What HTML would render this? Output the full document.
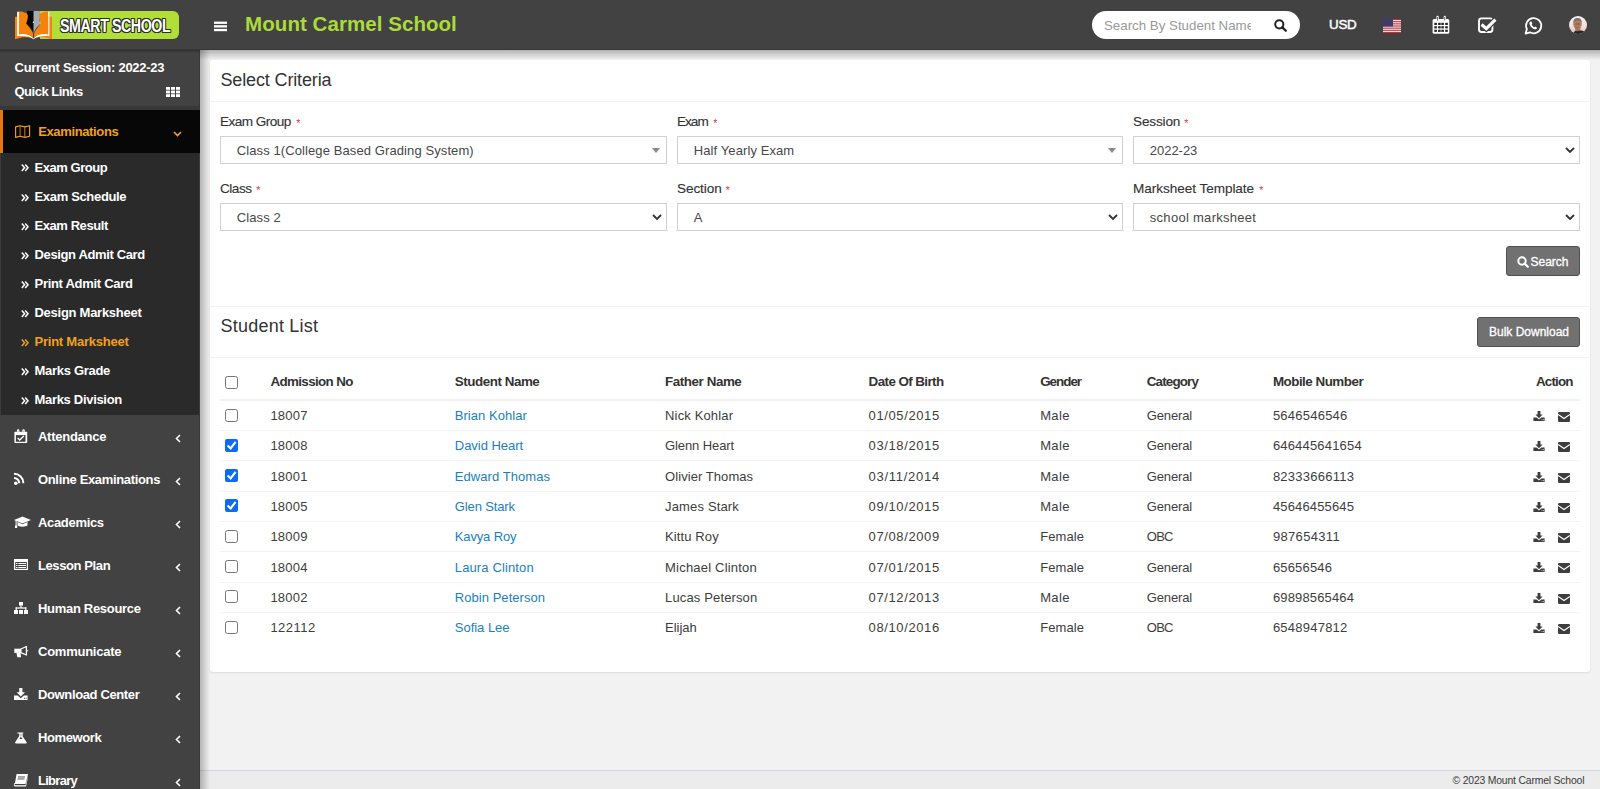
<!DOCTYPE html>
<html><head><meta charset="utf-8">
<style>
*{box-sizing:border-box;margin:0;padding:0}
html,body{width:1600px;height:789px;overflow:hidden;background:#f2f2f2;font-family:"Liberation Sans",sans-serif;color:#333;position:relative}
.a{position:absolute}
.t{position:absolute;line-height:1;white-space:nowrap}
svg{position:absolute;overflow:visible}
</style></head><body>
<div class="a" style="left:200px;top:50px;width:1400px;height:739px;background:#f2f2f2"></div>
<div class="a" style="left:200px;top:770px;width:1400px;height:19px;background:#ececec;border-top:1px solid #d2d6de"></div>
<div class="a" style="left:200px;top:50px;width:10px;height:739px;background:linear-gradient(to right,rgba(0,0,0,.25),rgba(0,0,0,0))"></div>
<div class="a" style="left:200px;top:50px;width:1400px;height:10px;background:linear-gradient(to bottom,rgba(0,0,0,.26),rgba(0,0,0,.0))"></div>
<div class="t" style="left:1452.50px;top:775.56px;font-size:10.4px;color:#3a3a3a;letter-spacing:-0.180px;">© 2023 Mount Carmel School</div>
<div class="a" style="left:210px;top:60px;width:1380px;height:612px;background:#fff;border-radius:3px;box-shadow:0 1px 2px rgba(0,0,0,.09)"></div>
<div class="a" style="left:210px;top:101px;width:1380px;height:1px;background:#f4f4f4"></div>
<div class="t" style="left:220.50px;top:70.90px;font-size:18px;color:#333;letter-spacing:-0.143px;">Select Criteria</div>
<div class="t" style="left:220.00px;top:115.04px;font-size:13.6px;color:#333;letter-spacing:-0.556px;-webkit-text-stroke:0.12px #333;">Exam Group</div>
<div class="t" style="left:296.3px;top:118.0px;font-size:10.5px;color:#e0304a">*</div>
<div class="a" style="left:220px;top:136px;width:447px;height:28px;background:#fff;border:1px solid #d2d2d2"></div>
<div class="t" style="left:236.80px;top:143.95px;font-size:13px;color:#474747;letter-spacing:0.097px;">Class 1(College Based Grading System)</div>
<svg style="left:652px;top:148px" width="8" height="5" viewBox="0 0 8 5"><path d="M0 0 L8 0 L4 5 Z" fill="#888"/></svg>
<div class="t" style="left:677.00px;top:115.04px;font-size:13.6px;color:#333;letter-spacing:-1.000px;-webkit-text-stroke:0.12px #333;">Exam</div>
<div class="t" style="left:713.3px;top:118.0px;font-size:10.5px;color:#e0304a">*</div>
<div class="a" style="left:677px;top:136px;width:446px;height:28px;background:#fff;border:1px solid #d2d2d2"></div>
<div class="t" style="left:693.80px;top:143.95px;font-size:13px;color:#474747;letter-spacing:0.093px;">Half Yearly Exam</div>
<svg style="left:1108px;top:148px" width="8" height="5" viewBox="0 0 8 5"><path d="M0 0 L8 0 L4 5 Z" fill="#888"/></svg>
<div class="t" style="left:1133.00px;top:115.04px;font-size:13.6px;color:#333;letter-spacing:-0.167px;-webkit-text-stroke:0.12px #333;">Session</div>
<div class="t" style="left:1184.3px;top:118.0px;font-size:10.5px;color:#e0304a">*</div>
<div class="a" style="left:1133px;top:136px;width:447px;height:28px;background:#fff;border:1px solid #d2d2d2"></div>
<div class="t" style="left:1149.80px;top:143.95px;font-size:13px;color:#474747;letter-spacing:-0.033px;">2022-23</div>
<svg style="left:1565px;top:147px" width="10" height="6" viewBox="0 0 10 6"><path d="M1 1 L5 5 L9 1" fill="none" stroke="#333" stroke-width="1.8"/></svg>
<div class="t" style="left:220.00px;top:181.84px;font-size:13.6px;color:#333;letter-spacing:-0.500px;-webkit-text-stroke:0.12px #333;">Class</div>
<div class="t" style="left:256.3px;top:184.8px;font-size:10.5px;color:#e0304a">*</div>
<div class="a" style="left:220px;top:203px;width:447px;height:28px;background:#fff;border:1px solid #d2d2d2"></div>
<div class="t" style="left:236.80px;top:210.95px;font-size:13px;color:#474747;letter-spacing:0.100px;">Class 2</div>
<svg style="left:652px;top:214px" width="10" height="6" viewBox="0 0 10 6"><path d="M1 1 L5 5 L9 1" fill="none" stroke="#333" stroke-width="1.8"/></svg>
<div class="t" style="left:677.00px;top:181.84px;font-size:13.6px;color:#333;letter-spacing:-0.100px;-webkit-text-stroke:0.12px #333;">Section</div>
<div class="t" style="left:725.7px;top:184.8px;font-size:10.5px;color:#e0304a">*</div>
<div class="a" style="left:677px;top:203px;width:446px;height:28px;background:#fff;border:1px solid #d2d2d2"></div>
<div class="t" style="left:693.80px;top:210.95px;font-size:13px;color:#474747;">A</div>
<svg style="left:1108px;top:214px" width="10" height="6" viewBox="0 0 10 6"><path d="M1 1 L5 5 L9 1" fill="none" stroke="#333" stroke-width="1.8"/></svg>
<div class="t" style="left:1133.00px;top:181.84px;font-size:13.6px;color:#333;letter-spacing:-0.059px;-webkit-text-stroke:0.12px #333;">Marksheet Template</div>
<div class="t" style="left:1259.3px;top:184.8px;font-size:10.5px;color:#e0304a">*</div>
<div class="a" style="left:1133px;top:203px;width:447px;height:28px;background:#fff;border:1px solid #d2d2d2"></div>
<div class="t" style="left:1149.80px;top:210.95px;font-size:13px;color:#474747;letter-spacing:0.287px;">school marksheet</div>
<svg style="left:1565px;top:214px" width="10" height="6" viewBox="0 0 10 6"><path d="M1 1 L5 5 L9 1" fill="none" stroke="#333" stroke-width="1.8"/></svg>
<div class="a" style="left:1506px;top:246px;width:74px;height:30px;background:#717171;border:1px solid #505050;border-radius:3px"></div>
<svg style="left:1517px;top:255.7px" width="12" height="12" viewBox="0 0 12 12"><circle cx="5" cy="5" r="3.7" fill="none" stroke="#fff" stroke-width="2"/><path d="M7.6 7.6 L10.8 10.8" stroke="#fff" stroke-width="2.2" stroke-linecap="round"/></svg>
<div class="t" style="left:1530.50px;top:255.80px;font-size:12px;color:#fff;-webkit-text-stroke:0.3px #fff;">Search</div>
<div class="a" style="left:210px;top:306px;width:1380px;height:1px;background:#f4f4f4"></div>
<div class="a" style="left:210px;top:357px;width:1380px;height:1px;background:#f4f4f4"></div>
<div class="t" style="left:220.50px;top:317.30px;font-size:18px;color:#333;letter-spacing:0.227px;">Student List</div>
<div class="a" style="left:1477px;top:317px;width:103px;height:30px;background:#717171;border:1px solid #505050;border-radius:3px"></div>
<div class="t" style="left:1489.00px;top:326.30px;font-size:12px;color:#fff;-webkit-text-stroke:0.3px #fff;">Bulk Download</div>
<div class="t" style="left:270.40px;top:375.31px;font-size:13.4px;color:#333;font-weight:bold;letter-spacing:-0.636px;">Admission No</div>
<div class="t" style="left:454.80px;top:375.31px;font-size:13.4px;color:#333;font-weight:bold;letter-spacing:-0.455px;">Student Name</div>
<div class="t" style="left:665.10px;top:375.31px;font-size:13.4px;color:#333;font-weight:bold;letter-spacing:-0.440px;">Father Name</div>
<div class="t" style="left:868.60px;top:375.31px;font-size:13.4px;color:#333;font-weight:bold;letter-spacing:-0.583px;">Date Of Birth</div>
<div class="t" style="left:1040.20px;top:375.31px;font-size:13.4px;color:#333;font-weight:bold;letter-spacing:-1.000px;">Gender</div>
<div class="t" style="left:1146.80px;top:375.31px;font-size:13.4px;color:#333;font-weight:bold;letter-spacing:-0.857px;">Category</div>
<div class="t" style="left:1272.90px;top:375.31px;font-size:13.4px;color:#333;font-weight:bold;letter-spacing:-0.500px;">Mobile Number</div>
<div class="t" style="left:1535.90px;top:375.31px;font-size:13.4px;color:#333;font-weight:bold;letter-spacing:-0.800px;">Action</div>
<svg style="left:225px;top:376px" width="13" height="13" viewBox="0 0 13 13"><rect x="0.5" y="0.5" width="12" height="12" rx="2" fill="#fff" stroke="#767676" stroke-width="1"/></svg>
<div class="a" style="left:220px;top:399px;width:1360px;height:2px;background:#f1f1f1"></div>
<div class="a" style="left:220px;top:430px;width:1360px;height:1px;background:#f2f2f2"></div>
<svg style="left:225px;top:409px" width="13" height="13" viewBox="0 0 13 13"><rect x="0.5" y="0.5" width="12" height="12" rx="2" fill="#fff" stroke="#767676" stroke-width="1"/></svg>
<div class="t" style="left:270.40px;top:409.05px;font-size:13px;color:#3d3d3d;letter-spacing:0.237px;">18007</div>
<div class="t" style="left:454.80px;top:409.05px;font-size:13px;color:#1a80c0;letter-spacing:0.036px;">Brian Kohlar</div>
<div class="t" style="left:665.10px;top:409.05px;font-size:13px;color:#3d3d3d;letter-spacing:0.140px;">Nick Kohlar</div>
<div class="t" style="left:868.60px;top:409.05px;font-size:13px;color:#3d3d3d;letter-spacing:0.611px;">01/05/2015</div>
<div class="t" style="left:1040.20px;top:409.05px;font-size:13px;color:#3d3d3d;letter-spacing:0.333px;">Male</div>
<div class="t" style="left:1146.80px;top:409.05px;font-size:13px;color:#3d3d3d;letter-spacing:-0.133px;">General</div>
<div class="t" style="left:1272.90px;top:409.05px;font-size:13px;color:#3d3d3d;letter-spacing:0.233px;">5646546546</div>
<svg style="left:1533px;top:411px" width="12" height="10" viewBox="0 0 12 10"><path d="M4.6 0 H7.4 V3.6 H9.6 L6 7.2 L2.4 3.6 H4.6 Z" fill="#3d3d3d"/><path d="M0.4 6.4 H3.6 L6 8.6 L8.4 6.4 H11.6 V10 H0.4 Z" fill="#3d3d3d"/><rect x="8.6" y="8.2" width="0.9" height="0.9" fill="#ddd"/><rect x="10" y="8.2" width="0.9" height="0.9" fill="#ddd"/></svg>
<svg style="left:1558px;top:412px" width="12" height="10" viewBox="0 0 12 10"><rect x="0" y="0" width="12" height="10" rx="1.3" fill="#3d3d3d"/><path d="M0.2 2.5 L6 6.5 L11.8 2.5" fill="none" stroke="#fff" stroke-width="1.1"/></svg>
<div class="a" style="left:220px;top:460px;width:1360px;height:1px;background:#f2f2f2"></div>
<svg style="left:225px;top:439px" width="13" height="13" viewBox="0 0 13 13"><rect x="0" y="0" width="13" height="13" rx="2" fill="#0b6cf0"/><path d="M2.6 6.6 L5.6 9.5 L10.6 2.8" fill="none" stroke="#fff" stroke-width="2.1"/></svg>
<div class="t" style="left:270.40px;top:439.35px;font-size:13px;color:#3d3d3d;letter-spacing:0.237px;">18008</div>
<div class="t" style="left:454.80px;top:439.35px;font-size:13px;color:#1a80c0;letter-spacing:-0.030px;">David Heart</div>
<div class="t" style="left:665.10px;top:439.35px;font-size:13px;color:#3d3d3d;letter-spacing:-0.110px;">Glenn Heart</div>
<div class="t" style="left:868.60px;top:439.35px;font-size:13px;color:#3d3d3d;letter-spacing:0.611px;">03/18/2015</div>
<div class="t" style="left:1040.20px;top:439.35px;font-size:13px;color:#3d3d3d;letter-spacing:0.333px;">Male</div>
<div class="t" style="left:1146.80px;top:439.35px;font-size:13px;color:#3d3d3d;letter-spacing:-0.133px;">General</div>
<div class="t" style="left:1272.90px;top:439.35px;font-size:13px;color:#3d3d3d;letter-spacing:0.178px;">646445641654</div>
<svg style="left:1533px;top:441px" width="12" height="10" viewBox="0 0 12 10"><path d="M4.6 0 H7.4 V3.6 H9.6 L6 7.2 L2.4 3.6 H4.6 Z" fill="#3d3d3d"/><path d="M0.4 6.4 H3.6 L6 8.6 L8.4 6.4 H11.6 V10 H0.4 Z" fill="#3d3d3d"/><rect x="8.6" y="8.2" width="0.9" height="0.9" fill="#ddd"/><rect x="10" y="8.2" width="0.9" height="0.9" fill="#ddd"/></svg>
<svg style="left:1558px;top:442px" width="12" height="10" viewBox="0 0 12 10"><rect x="0" y="0" width="12" height="10" rx="1.3" fill="#3d3d3d"/><path d="M0.2 2.5 L6 6.5 L11.8 2.5" fill="none" stroke="#fff" stroke-width="1.1"/></svg>
<div class="a" style="left:220px;top:491px;width:1360px;height:1px;background:#f2f2f2"></div>
<svg style="left:225px;top:469px" width="13" height="13" viewBox="0 0 13 13"><rect x="0" y="0" width="13" height="13" rx="2" fill="#0b6cf0"/><path d="M2.6 6.6 L5.6 9.5 L10.6 2.8" fill="none" stroke="#fff" stroke-width="2.1"/></svg>
<div class="t" style="left:270.40px;top:469.65px;font-size:13px;color:#3d3d3d;letter-spacing:0.237px;">18001</div>
<div class="t" style="left:454.80px;top:469.65px;font-size:13px;color:#1a80c0;letter-spacing:0.067px;">Edward Thomas</div>
<div class="t" style="left:665.10px;top:469.65px;font-size:13px;color:#3d3d3d;letter-spacing:0.062px;">Olivier Thomas</div>
<div class="t" style="left:868.60px;top:469.65px;font-size:13px;color:#3d3d3d;letter-spacing:0.722px;">03/11/2014</div>
<div class="t" style="left:1040.20px;top:469.65px;font-size:13px;color:#3d3d3d;letter-spacing:0.333px;">Male</div>
<div class="t" style="left:1146.80px;top:469.65px;font-size:13px;color:#3d3d3d;letter-spacing:-0.133px;">General</div>
<div class="t" style="left:1272.90px;top:469.65px;font-size:13px;color:#3d3d3d;letter-spacing:0.253px;">82333666113</div>
<svg style="left:1533px;top:472px" width="12" height="10" viewBox="0 0 12 10"><path d="M4.6 0 H7.4 V3.6 H9.6 L6 7.2 L2.4 3.6 H4.6 Z" fill="#3d3d3d"/><path d="M0.4 6.4 H3.6 L6 8.6 L8.4 6.4 H11.6 V10 H0.4 Z" fill="#3d3d3d"/><rect x="8.6" y="8.2" width="0.9" height="0.9" fill="#ddd"/><rect x="10" y="8.2" width="0.9" height="0.9" fill="#ddd"/></svg>
<svg style="left:1558px;top:473px" width="12" height="10" viewBox="0 0 12 10"><rect x="0" y="0" width="12" height="10" rx="1.3" fill="#3d3d3d"/><path d="M0.2 2.5 L6 6.5 L11.8 2.5" fill="none" stroke="#fff" stroke-width="1.1"/></svg>
<div class="a" style="left:220px;top:521px;width:1360px;height:1px;background:#f2f2f2"></div>
<svg style="left:225px;top:499px" width="13" height="13" viewBox="0 0 13 13"><rect x="0" y="0" width="13" height="13" rx="2" fill="#0b6cf0"/><path d="M2.6 6.6 L5.6 9.5 L10.6 2.8" fill="none" stroke="#fff" stroke-width="2.1"/></svg>
<div class="t" style="left:270.40px;top:499.95px;font-size:13px;color:#3d3d3d;letter-spacing:0.237px;">18005</div>
<div class="t" style="left:454.80px;top:499.95px;font-size:13px;color:#1a80c0;letter-spacing:-0.133px;">Glen Stark</div>
<div class="t" style="left:665.10px;top:499.95px;font-size:13px;color:#3d3d3d;letter-spacing:0.150px;">James Stark</div>
<div class="t" style="left:868.60px;top:499.95px;font-size:13px;color:#3d3d3d;letter-spacing:0.611px;">09/10/2015</div>
<div class="t" style="left:1040.20px;top:499.95px;font-size:13px;color:#3d3d3d;letter-spacing:0.333px;">Male</div>
<div class="t" style="left:1146.80px;top:499.95px;font-size:13px;color:#3d3d3d;letter-spacing:-0.133px;">General</div>
<div class="t" style="left:1272.90px;top:499.95px;font-size:13px;color:#3d3d3d;letter-spacing:0.153px;">45646455645</div>
<svg style="left:1533px;top:502px" width="12" height="10" viewBox="0 0 12 10"><path d="M4.6 0 H7.4 V3.6 H9.6 L6 7.2 L2.4 3.6 H4.6 Z" fill="#3d3d3d"/><path d="M0.4 6.4 H3.6 L6 8.6 L8.4 6.4 H11.6 V10 H0.4 Z" fill="#3d3d3d"/><rect x="8.6" y="8.2" width="0.9" height="0.9" fill="#ddd"/><rect x="10" y="8.2" width="0.9" height="0.9" fill="#ddd"/></svg>
<svg style="left:1558px;top:503px" width="12" height="10" viewBox="0 0 12 10"><rect x="0" y="0" width="12" height="10" rx="1.3" fill="#3d3d3d"/><path d="M0.2 2.5 L6 6.5 L11.8 2.5" fill="none" stroke="#fff" stroke-width="1.1"/></svg>
<div class="a" style="left:220px;top:551px;width:1360px;height:1px;background:#f2f2f2"></div>
<svg style="left:225px;top:530px" width="13" height="13" viewBox="0 0 13 13"><rect x="0.5" y="0.5" width="12" height="12" rx="2" fill="#fff" stroke="#767676" stroke-width="1"/></svg>
<div class="t" style="left:270.40px;top:530.25px;font-size:13px;color:#3d3d3d;letter-spacing:0.237px;">18009</div>
<div class="t" style="left:454.80px;top:530.25px;font-size:13px;color:#1a80c0;letter-spacing:-0.150px;">Kavya Roy</div>
<div class="t" style="left:665.10px;top:530.25px;font-size:13px;color:#3d3d3d;letter-spacing:0.100px;">Kittu Roy</div>
<div class="t" style="left:868.60px;top:530.25px;font-size:13px;color:#3d3d3d;letter-spacing:0.611px;">07/08/2009</div>
<div class="t" style="left:1040.20px;top:530.25px;font-size:13px;color:#3d3d3d;letter-spacing:0.100px;">Female</div>
<div class="t" style="left:1146.80px;top:530.25px;font-size:13px;color:#3d3d3d;letter-spacing:-0.750px;">OBC</div>
<div class="t" style="left:1272.90px;top:530.25px;font-size:13px;color:#3d3d3d;letter-spacing:0.334px;">987654311</div>
<svg style="left:1533px;top:532px" width="12" height="10" viewBox="0 0 12 10"><path d="M4.6 0 H7.4 V3.6 H9.6 L6 7.2 L2.4 3.6 H4.6 Z" fill="#3d3d3d"/><path d="M0.4 6.4 H3.6 L6 8.6 L8.4 6.4 H11.6 V10 H0.4 Z" fill="#3d3d3d"/><rect x="8.6" y="8.2" width="0.9" height="0.9" fill="#ddd"/><rect x="10" y="8.2" width="0.9" height="0.9" fill="#ddd"/></svg>
<svg style="left:1558px;top:533px" width="12" height="10" viewBox="0 0 12 10"><rect x="0" y="0" width="12" height="10" rx="1.3" fill="#3d3d3d"/><path d="M0.2 2.5 L6 6.5 L11.8 2.5" fill="none" stroke="#fff" stroke-width="1.1"/></svg>
<div class="a" style="left:220px;top:582px;width:1360px;height:1px;background:#f2f2f2"></div>
<svg style="left:225px;top:560px" width="13" height="13" viewBox="0 0 13 13"><rect x="0.5" y="0.5" width="12" height="12" rx="2" fill="#fff" stroke="#767676" stroke-width="1"/></svg>
<div class="t" style="left:270.40px;top:560.55px;font-size:13px;color:#3d3d3d;letter-spacing:0.237px;">18004</div>
<div class="t" style="left:454.80px;top:560.55px;font-size:13px;color:#1a80c0;letter-spacing:0.125px;">Laura Clinton</div>
<div class="t" style="left:665.10px;top:560.55px;font-size:13px;color:#3d3d3d;letter-spacing:0.200px;">Michael Clinton</div>
<div class="t" style="left:868.60px;top:560.55px;font-size:13px;color:#3d3d3d;letter-spacing:0.611px;">07/01/2015</div>
<div class="t" style="left:1040.20px;top:560.55px;font-size:13px;color:#3d3d3d;letter-spacing:0.100px;">Female</div>
<div class="t" style="left:1146.80px;top:560.55px;font-size:13px;color:#3d3d3d;letter-spacing:-0.133px;">General</div>
<div class="t" style="left:1272.90px;top:560.55px;font-size:13px;color:#3d3d3d;letter-spacing:0.177px;">65656546</div>
<svg style="left:1533px;top:562px" width="12" height="10" viewBox="0 0 12 10"><path d="M4.6 0 H7.4 V3.6 H9.6 L6 7.2 L2.4 3.6 H4.6 Z" fill="#3d3d3d"/><path d="M0.4 6.4 H3.6 L6 8.6 L8.4 6.4 H11.6 V10 H0.4 Z" fill="#3d3d3d"/><rect x="8.6" y="8.2" width="0.9" height="0.9" fill="#ddd"/><rect x="10" y="8.2" width="0.9" height="0.9" fill="#ddd"/></svg>
<svg style="left:1558px;top:563px" width="12" height="10" viewBox="0 0 12 10"><rect x="0" y="0" width="12" height="10" rx="1.3" fill="#3d3d3d"/><path d="M0.2 2.5 L6 6.5 L11.8 2.5" fill="none" stroke="#fff" stroke-width="1.1"/></svg>
<div class="a" style="left:220px;top:612px;width:1360px;height:1px;background:#f2f2f2"></div>
<svg style="left:225px;top:590px" width="13" height="13" viewBox="0 0 13 13"><rect x="0.5" y="0.5" width="12" height="12" rx="2" fill="#fff" stroke="#767676" stroke-width="1"/></svg>
<div class="t" style="left:270.40px;top:590.85px;font-size:13px;color:#3d3d3d;letter-spacing:0.237px;">18002</div>
<div class="t" style="left:454.80px;top:590.85px;font-size:13px;color:#1a80c0;letter-spacing:0.046px;">Robin Peterson</div>
<div class="t" style="left:665.10px;top:590.85px;font-size:13px;color:#3d3d3d;letter-spacing:0.138px;">Lucas Peterson</div>
<div class="t" style="left:868.60px;top:590.85px;font-size:13px;color:#3d3d3d;letter-spacing:0.611px;">07/12/2013</div>
<div class="t" style="left:1040.20px;top:590.85px;font-size:13px;color:#3d3d3d;letter-spacing:0.333px;">Male</div>
<div class="t" style="left:1146.80px;top:590.85px;font-size:13px;color:#3d3d3d;letter-spacing:-0.133px;">General</div>
<div class="t" style="left:1272.90px;top:590.85px;font-size:13px;color:#3d3d3d;letter-spacing:0.153px;">69898565464</div>
<svg style="left:1533px;top:593px" width="12" height="10" viewBox="0 0 12 10"><path d="M4.6 0 H7.4 V3.6 H9.6 L6 7.2 L2.4 3.6 H4.6 Z" fill="#3d3d3d"/><path d="M0.4 6.4 H3.6 L6 8.6 L8.4 6.4 H11.6 V10 H0.4 Z" fill="#3d3d3d"/><rect x="8.6" y="8.2" width="0.9" height="0.9" fill="#ddd"/><rect x="10" y="8.2" width="0.9" height="0.9" fill="#ddd"/></svg>
<svg style="left:1558px;top:594px" width="12" height="10" viewBox="0 0 12 10"><rect x="0" y="0" width="12" height="10" rx="1.3" fill="#3d3d3d"/><path d="M0.2 2.5 L6 6.5 L11.8 2.5" fill="none" stroke="#fff" stroke-width="1.1"/></svg>
<svg style="left:225px;top:621px" width="13" height="13" viewBox="0 0 13 13"><rect x="0.5" y="0.5" width="12" height="12" rx="2" fill="#fff" stroke="#767676" stroke-width="1"/></svg>
<div class="t" style="left:270.40px;top:621.15px;font-size:13px;color:#3d3d3d;letter-spacing:0.476px;">122112</div>
<div class="t" style="left:454.80px;top:621.15px;font-size:13px;color:#1a80c0;letter-spacing:-0.025px;">Sofia Lee</div>
<div class="t" style="left:665.10px;top:621.15px;font-size:13px;color:#3d3d3d;letter-spacing:-0.020px;">Elijah</div>
<div class="t" style="left:868.60px;top:621.15px;font-size:13px;color:#3d3d3d;letter-spacing:0.611px;">08/10/2016</div>
<div class="t" style="left:1040.20px;top:621.15px;font-size:13px;color:#3d3d3d;letter-spacing:0.100px;">Female</div>
<div class="t" style="left:1146.80px;top:621.15px;font-size:13px;color:#3d3d3d;letter-spacing:-0.750px;">OBC</div>
<div class="t" style="left:1272.90px;top:621.15px;font-size:13px;color:#3d3d3d;letter-spacing:0.233px;">6548947812</div>
<svg style="left:1533px;top:623px" width="12" height="10" viewBox="0 0 12 10"><path d="M4.6 0 H7.4 V3.6 H9.6 L6 7.2 L2.4 3.6 H4.6 Z" fill="#3d3d3d"/><path d="M0.4 6.4 H3.6 L6 8.6 L8.4 6.4 H11.6 V10 H0.4 Z" fill="#3d3d3d"/><rect x="8.6" y="8.2" width="0.9" height="0.9" fill="#ddd"/><rect x="10" y="8.2" width="0.9" height="0.9" fill="#ddd"/></svg>
<svg style="left:1558px;top:624px" width="12" height="10" viewBox="0 0 12 10"><rect x="0" y="0" width="12" height="10" rx="1.3" fill="#3d3d3d"/><path d="M0.2 2.5 L6 6.5 L11.8 2.5" fill="none" stroke="#fff" stroke-width="1.1"/></svg>
<div class="a" style="left:0px;top:0px;width:1600px;height:50px;background:#424242"></div>
<div class="a" style="left:0px;top:49px;width:1600px;height:1px;background:#363636"></div>
<div class="a" style="left:40px;top:11px;width:139px;height:28px;background:#b2de38;border-radius:0 6px 6px 0"></div>
<svg style="left:14px;top:10px" width="40" height="30" viewBox="14 10 40 30">
<path d="M15 16.8 L18.2 16.8 L18.2 34.5 C24 33 30 34 33.6 38.6 C30 36.6 22 36.6 15 39.2 Z" fill="#f5820d"/>
<path d="M52 16.8 L48.8 16.8 L48.8 34.5 C43 33 37 34 33.6 38.6 C37 36.6 45 36.6 52 39.2 Z" fill="#f5820d"/>
<path d="M17.1 11.8 L19 11.8 L19 34.4 C24 33 30 34 33.6 38.4 L33.6 39.2 C30 36.3 23 35.6 17.1 36.3 Z" fill="#fff"/>
<path d="M49.4 11.8 L48.1 11.8 L48.1 34.4 C43 33 37 34 33.6 38.4 L33.6 39.2 C37 36.3 44 35.6 49.4 36.3 Z" fill="#fff"/>
<path d="M18.9 11.5 C24 11.6 27.5 13 28.7 16 C28 19 26 22 26.2 23.6 C28 26 31 29 33 33.3 L33 37.6 C30 34.5 24 33.6 18.9 34.3 Z" fill="#f5820d"/>
<path d="M48.2 11.5 C43 11.6 39.5 13 38.6 16 C39 19 41 22 40.8 23.6 C39 26 36 29 34.1 33.3 L34.1 37.6 C37 34.5 43 33.6 48.2 34.3 Z" fill="#f5820d"/>
<path d="M27.1 11 L33.6 11 L33.6 33 C32 29 29.5 26.5 26.4 23.6 C27.6 21 28 18 27.8 14.4 L27.1 14.4 Z" fill="#0a0a0a"/>
<path d="M33.6 11 L39.9 11 L39.9 14.4 L39.3 14.4 C39.1 18 39.6 21 40.6 23.6 C37.5 26.5 35 29 33.6 33 Z" fill="#a3acb0"/>
<circle cx="33.4" cy="22.3" r="0.7" fill="#fff"/>
</svg>
<div class="t" style="left:59.5px;top:17.4px;font-size:16.5px;font-weight:bold;color:#fff;letter-spacing:-0.5px;transform:scale(0.862,1.06);transform-origin:0 0;text-shadow:-1px 0 0 #2b2b2b,1px 0 0 #2b2b2b,0 -1px 0 #2b2b2b,0 1px 0 #2b2b2b,-1px -1px 0 #2b2b2b,1px 1px 0 #2b2b2b,-1px 1px 0 #2b2b2b,1px -1px 0 #2b2b2b">SMART SCHOOL</div>
<svg style="left:214px;top:21px" width="13" height="11" viewBox="0 0 13 11"><rect x="0" y="0.6" width="13" height="2.3" fill="#fff"/><rect x="0" y="4.2" width="13" height="2.3" fill="#fff"/><rect x="0" y="7.9" width="13" height="2.3" fill="#fff"/></svg>
<div class="t" style="left:245.10px;top:13.77px;font-size:20.5px;color:#abdb39;font-weight:bold;letter-spacing:0.056px;">Mount Carmel School</div>
<div class="a" style="left:1092px;top:11px;width:208px;height:28px;background:#fff;border-radius:14px"></div>
<div class="a" style="left:1104px;top:14px;width:147px;height:22px;overflow:hidden"><div class="t" style="left:0.00px;top:5.30px;font-size:13.3px;color:#999;">Search By Student Name</div>
</div>
<svg style="left:1274px;top:19px" width="13" height="13" viewBox="0 0 13 13"><circle cx="5.3" cy="5.3" r="4.1" fill="none" stroke="#222" stroke-width="2"/><path d="M8.4 8.4 L11.8 11.8" stroke="#222" stroke-width="2.3" stroke-linecap="round"/></svg>
<div class="t" style="left:1329.00px;top:18.31px;font-size:13.4px;color:#fff;letter-spacing:-0.250px;-webkit-text-stroke:0.45px #fff;">USD</div>
<svg style="left:1383px;top:19px" width="18" height="14" viewBox="0 0 18 14"><rect width="18" height="14" fill="#eee"/><rect y="0.00" width="18" height="1.08" fill="#c0303c"/><rect y="2.15" width="18" height="1.08" fill="#c0303c"/><rect y="4.31" width="18" height="1.08" fill="#c0303c"/><rect y="6.46" width="18" height="1.08" fill="#c0303c"/><rect y="8.62" width="18" height="1.08" fill="#c0303c"/><rect y="10.77" width="18" height="1.08" fill="#c0303c"/><rect y="12.92" width="18" height="1.08" fill="#c0303c"/><rect width="10" height="7.5" fill="#3c3b6e"/></svg>
<svg style="left:1432px;top:15px" width="18" height="19" viewBox="0 0 18 19"><rect x="0.6" y="3.9" width="16.7" height="14.9" rx="1.6" fill="#fff"/><rect x="4.4" y="0.8" width="2.3" height="5.3" rx="1.1" fill="#fff"/><rect x="11.6" y="0.8" width="2.3" height="5.3" rx="1.1" fill="#fff"/><rect x="5" y="2" width="1" height="3.5" fill="#6a6a6a"/><rect x="12.2" y="2" width="1" height="3.5" fill="#6a6a6a"/><rect x="2.3" y="7.8" width="2.6" height="2.2" fill="#262626"/><rect x="6.1" y="7.8" width="2.6" height="2.2" fill="#262626"/><rect x="9.3" y="7.8" width="2.6" height="2.2" fill="#262626"/><rect x="13.2" y="7.8" width="2.6" height="2.2" fill="#262626"/><rect x="2.3" y="11.2" width="2.6" height="2.2" fill="#262626"/><rect x="6.1" y="11.2" width="2.6" height="2.2" fill="#262626"/><rect x="9.3" y="11.2" width="2.6" height="2.2" fill="#262626"/><rect x="13.2" y="11.2" width="2.6" height="2.2" fill="#262626"/><rect x="2.3" y="14.7" width="2.6" height="2.2" fill="#262626"/><rect x="6.1" y="14.7" width="2.6" height="2.2" fill="#262626"/><rect x="9.3" y="14.7" width="2.6" height="2.2" fill="#262626"/><rect x="13.2" y="14.7" width="2.6" height="2.2" fill="#262626"/></svg>
<svg style="left:1477px;top:16px" width="20" height="18" viewBox="0 0 20 18"><rect x="2" y="2.4" width="13.4" height="13.6" rx="2.4" fill="none" stroke="#fff" stroke-width="1.9"/><path d="M4.6 8.5 L9.3 12.6 L18.4 3.6" fill="none" stroke="#424242" stroke-width="5.6"/><path d="M4.6 8.5 L9.3 12.6 L18.4 3.6" fill="none" stroke="#fff" stroke-width="3.1"/></svg>
<svg style="left:1524px;top:16px" width="19" height="19" viewBox="0 0 19 19"><path d="M1.6 17.6 L2.9 13.1 A7.6 7.6 0 1 1 6 16.3 Z" fill="none" stroke="#fff" stroke-width="1.8" stroke-linejoin="round"/><path d="M6.1 5.7 C5.4 6.3 5.2 7.6 6 9.2 C7.1 11.3 8.7 12.7 10.7 13.3 C11.9 13.6 12.8 12.9 13.1 12 L11.4 10.6 L10.5 11.3 C9.3 10.7 8.3 9.7 7.7 8.4 L8.4 7.5 L7.4 5.4 Z" fill="#fff"/></svg>
<svg style="left:1569px;top:15.6px" width="18" height="18" viewBox="0 0 18 18"><defs><clipPath id="av"><circle cx="9" cy="9" r="9"/></clipPath><linearGradient id="ag" x1="0" y1="0" x2="0" y2="1"><stop offset="0" stop-color="#f6f4f3"/><stop offset="0.6" stop-color="#f3dfd8"/><stop offset="0.8" stop-color="#e8cccc"/><stop offset="0.95" stop-color="#b8d0ea"/></linearGradient></defs>
<g clip-path="url(#av)"><rect width="18" height="18" fill="url(#ag)"/><rect x="6.3" y="11.5" width="5" height="5" fill="#a06e5a"/><path d="M4 18.5 L5.6 15.2 C7 14.6 8 15.2 9 15.3 L12 14.6 C14 14.5 15.6 15.5 16.8 18.5 Z" fill="#2a2220"/><ellipse cx="8.5" cy="8.3" rx="4.2" ry="5.4" fill="#ae7d68"/><path d="M4.3 8.4 C3.9 3 6 2.1 8.5 2.1 C11 2.1 13.1 3 12.8 8.4 C12.5 5.6 11.5 4.5 8.5 4.5 C5.5 4.5 4.6 5.6 4.3 8.4 Z" fill="#7e706a"/><path d="M6.5 8 H10.7" stroke="#6a4a40" stroke-width="0.8"/><path d="M7 11.3 H10" stroke="#8a5a4a" stroke-width="0.7"/></g></svg>
<div class="a" style="left:0px;top:50px;width:200px;height:739px;background:#424242"></div>
<div class="a" style="left:199px;top:50px;width:1px;height:739px;background:rgba(0,0,0,.13)"></div>
<div class="a" style="left:0px;top:50px;width:200px;height:3px;background:linear-gradient(to bottom,rgba(0,0,0,.25),rgba(0,0,0,0))"></div>
<div class="t" style="left:14.50px;top:60.95px;font-size:13px;color:#fff;font-weight:bold;letter-spacing:-0.261px;">Current Session: 2022-23</div>
<div class="t" style="left:14.50px;top:84.65px;font-size:13px;color:#fff;font-weight:bold;letter-spacing:-0.500px;">Quick Links</div>
<svg style="left:166px;top:87px" width="14" height="10" viewBox="0 0 14 10"><g fill="#fff"><rect x="0" y="0" width="4" height="2.8"/><rect x="5" y="0" width="4" height="2.8"/><rect x="10" y="0" width="4" height="2.8"/><rect x="0" y="3.6" width="4" height="2.8"/><rect x="5" y="3.6" width="4" height="2.8"/><rect x="10" y="3.6" width="4" height="2.8"/><rect x="0" y="7.2" width="4" height="2.8"/><rect x="5" y="7.2" width="4" height="2.8"/><rect x="10" y="7.2" width="4" height="2.8"/></g></svg>
<div class="a" style="left:0px;top:106px;width:200px;height:4px;background:#383838"></div>
<div class="a" style="left:0px;top:110px;width:200px;height:43px;background:#070707;border-left:3px solid #e8770f"></div>
<svg style="left:15px;top:125px" width="16" height="13" viewBox="0 0 16 13"><path d="M0.6 1.9 L5.1 0.7 L9.8 1.9 L14.6 0.7 L14.6 11.2 L9.8 12.4 L5.1 11.2 L0.6 12.4 Z" fill="none" stroke="#f2a020" stroke-width="1.15" stroke-linejoin="round"/><path d="M5.1 0.7 L5.1 11.2" stroke="#b07018" stroke-width="1.1"/><path d="M9.8 1.9 L9.8 12.4" stroke="#d08a1c" stroke-width="0.9"/></svg>
<div class="t" style="left:38.20px;top:124.65px;font-size:13px;color:#f2a020;font-weight:bold;letter-spacing:-0.364px;">Examinations</div>
<svg style="left:173px;top:131px" width="9" height="6" viewBox="0 0 9 6"><path d="M1 1 L4.5 4.5 L8 1" fill="none" stroke="#f2a020" stroke-width="1.6"/></svg>
<div class="a" style="left:0px;top:153px;width:200px;height:262px;background:#2a2a2a;border-left:1px solid #3c3c3c;border-right:1px solid #3c3c3c"></div>
<div class="t" style="left:34.50px;top:160.95px;font-size:13px;color:#fff;font-weight:bold;letter-spacing:-0.444px;">Exam Group</div>
<svg style="left:20.5px;top:164.4px" width="8" height="8" viewBox="0 0 8 8"><path d="M0.8 0.6 L3.6 3.8 L0.8 7 M4.2 0.6 L7 3.8 L4.2 7" fill="none" stroke="#fff" stroke-width="1.5"/></svg>
<div class="t" style="left:34.50px;top:190.01px;font-size:13px;color:#fff;font-weight:bold;letter-spacing:-0.333px;">Exam Schedule</div>
<svg style="left:20.5px;top:193.5px" width="8" height="8" viewBox="0 0 8 8"><path d="M0.8 0.6 L3.6 3.8 L0.8 7 M4.2 0.6 L7 3.8 L4.2 7" fill="none" stroke="#fff" stroke-width="1.5"/></svg>
<div class="t" style="left:34.50px;top:219.07px;font-size:13px;color:#fff;font-weight:bold;letter-spacing:-0.430px;">Exam Result</div>
<svg style="left:20.5px;top:222.5px" width="8" height="8" viewBox="0 0 8 8"><path d="M0.8 0.6 L3.6 3.8 L0.8 7 M4.2 0.6 L7 3.8 L4.2 7" fill="none" stroke="#fff" stroke-width="1.5"/></svg>
<div class="t" style="left:34.50px;top:248.13px;font-size:13px;color:#fff;font-weight:bold;letter-spacing:-0.362px;">Design Admit Card</div>
<svg style="left:20.5px;top:251.6px" width="8" height="8" viewBox="0 0 8 8"><path d="M0.8 0.6 L3.6 3.8 L0.8 7 M4.2 0.6 L7 3.8 L4.2 7" fill="none" stroke="#fff" stroke-width="1.5"/></svg>
<div class="t" style="left:34.50px;top:277.19px;font-size:13px;color:#fff;font-weight:bold;letter-spacing:-0.293px;">Print Admit Card</div>
<svg style="left:20.5px;top:280.6px" width="8" height="8" viewBox="0 0 8 8"><path d="M0.8 0.6 L3.6 3.8 L0.8 7 M4.2 0.6 L7 3.8 L4.2 7" fill="none" stroke="#fff" stroke-width="1.5"/></svg>
<div class="t" style="left:34.50px;top:306.25px;font-size:13px;color:#fff;font-weight:bold;letter-spacing:-0.267px;">Design Marksheet</div>
<svg style="left:20.5px;top:309.7px" width="8" height="8" viewBox="0 0 8 8"><path d="M0.8 0.6 L3.6 3.8 L0.8 7 M4.2 0.6 L7 3.8 L4.2 7" fill="none" stroke="#fff" stroke-width="1.5"/></svg>
<div class="t" style="left:34.50px;top:335.31px;font-size:13px;color:#f2a020;font-weight:bold;letter-spacing:-0.236px;">Print Marksheet</div>
<svg style="left:20.5px;top:338.8px" width="8" height="8" viewBox="0 0 8 8"><path d="M0.8 0.6 L3.6 3.8 L0.8 7 M4.2 0.6 L7 3.8 L4.2 7" fill="none" stroke="#f2a020" stroke-width="1.5"/></svg>
<div class="t" style="left:34.50px;top:364.37px;font-size:13px;color:#fff;font-weight:bold;letter-spacing:-0.300px;">Marks Grade</div>
<svg style="left:20.5px;top:367.8px" width="8" height="8" viewBox="0 0 8 8"><path d="M0.8 0.6 L3.6 3.8 L0.8 7 M4.2 0.6 L7 3.8 L4.2 7" fill="none" stroke="#fff" stroke-width="1.5"/></svg>
<div class="t" style="left:34.50px;top:393.43px;font-size:13px;color:#fff;font-weight:bold;letter-spacing:-0.308px;">Marks Division</div>
<svg style="left:20.5px;top:396.9px" width="8" height="8" viewBox="0 0 8 8"><path d="M0.8 0.6 L3.6 3.8 L0.8 7 M4.2 0.6 L7 3.8 L4.2 7" fill="none" stroke="#fff" stroke-width="1.5"/></svg>
<div class="t" style="left:38.00px;top:429.95px;font-size:13px;color:#fff;font-weight:bold;letter-spacing:-0.267px;">Attendance</div>
<svg style="left:14px;top:429.1px" width="14" height="15" viewBox="0 0 14 15"><rect x="0.4" y="2.8" width="12.8" height="11.3" rx="0.8" fill="#fff"/><rect x="1.9" y="6.1" width="9.6" height="6.7" fill="#424242"/><rect x="3" y="0.2" width="2.3" height="3.6" rx="1" fill="#fff"/><rect x="8.4" y="0.2" width="2.3" height="3.6" rx="1" fill="#fff"/><rect x="3.9" y="1.6" width="0.6" height="1.6" fill="#999"/><rect x="9.3" y="1.6" width="0.6" height="1.6" fill="#999"/><path d="M3.6 9.1 L5.7 11.1 L9.8 7.1" fill="none" stroke="#fff" stroke-width="1.35"/></svg>
<svg style="left:175px;top:434.0px" width="6" height="9" viewBox="0 0 6 9"><path d="M5 1 L1.5 4.5 L5 8" fill="none" stroke="#fff" stroke-width="1.6"/></svg>
<div class="t" style="left:38.00px;top:472.95px;font-size:13px;color:#fff;font-weight:bold;letter-spacing:-0.344px;">Online Examinations</div>
<svg style="left:14px;top:472.5px" width="11" height="11" viewBox="0 0 11 11"><circle cx="1.8" cy="10.2" r="1.8" fill="#fff"/><path d="M0 5 A5.2 5.2 0 0 1 5.2 10.2" fill="none" stroke="#fff" stroke-width="2"/><path d="M0 0.8 A9.4 9.4 0 0 1 9.4 10.2" fill="none" stroke="#fff" stroke-width="2"/></svg>
<svg style="left:175px;top:477.0px" width="6" height="9" viewBox="0 0 6 9"><path d="M5 1 L1.5 4.5 L5 8" fill="none" stroke="#fff" stroke-width="1.6"/></svg>
<div class="t" style="left:38.00px;top:515.95px;font-size:13px;color:#fff;font-weight:bold;letter-spacing:-0.325px;">Academics</div>
<svg style="left:14px;top:515.5px" width="17" height="12" viewBox="0 0 17 12"><path d="M0 4 L8.5 0.5 L17 4 L8.5 7.5 Z" fill="#fff"/><path d="M3.5 6 L3.5 9.5 C5 11 12 11 13.5 9.5 L13.5 6 L8.5 8.2 Z" fill="#fff"/><rect x="1.6" y="4" width="1" height="7" fill="#fff"/><rect x="1" y="9.5" width="2.2" height="2.5" fill="#fff"/></svg>
<svg style="left:175px;top:520.0px" width="6" height="9" viewBox="0 0 6 9"><path d="M5 1 L1.5 4.5 L5 8" fill="none" stroke="#fff" stroke-width="1.6"/></svg>
<div class="t" style="left:38.00px;top:558.95px;font-size:13px;color:#fff;font-weight:bold;letter-spacing:-0.400px;">Lesson Plan</div>
<svg style="left:14px;top:558.5px" width="14" height="11" viewBox="0 0 14 11"><rect x="0" y="0" width="14" height="11" fill="#fff"/><rect x="1.2" y="3" width="11.6" height="6.8" fill="#424242"/><g fill="#fff"><rect x="2" y="4" width="1.5" height="1"/><rect x="4.3" y="4" width="7.7" height="1"/><rect x="2" y="6" width="1.5" height="1"/><rect x="4.3" y="6" width="7.7" height="1"/><rect x="2" y="8" width="1.5" height="1"/><rect x="4.3" y="8" width="7.7" height="1"/></g></svg>
<svg style="left:175px;top:563.0px" width="6" height="9" viewBox="0 0 6 9"><path d="M5 1 L1.5 4.5 L5 8" fill="none" stroke="#fff" stroke-width="1.6"/></svg>
<div class="t" style="left:38.00px;top:601.95px;font-size:13px;color:#fff;font-weight:bold;letter-spacing:-0.308px;">Human Resource</div>
<svg style="left:14px;top:601.5px" width="14" height="12" viewBox="0 0 14 12"><rect x="5" y="0" width="4" height="3.6" fill="#fff"/><rect x="6.4" y="3.6" width="1.2" height="2.4" fill="#fff"/><rect x="1.6" y="5.4" width="10.8" height="1.2" fill="#fff"/><rect x="1.6" y="5.4" width="1.2" height="3" fill="#fff"/><rect x="11.2" y="5.4" width="1.2" height="3" fill="#fff"/><rect x="0" y="8" width="4" height="4" fill="#fff"/><rect x="5" y="8" width="4" height="4" fill="#fff"/><rect x="10" y="8" width="4" height="4" fill="#fff"/></svg>
<svg style="left:175px;top:606.0px" width="6" height="9" viewBox="0 0 6 9"><path d="M5 1 L1.5 4.5 L5 8" fill="none" stroke="#fff" stroke-width="1.6"/></svg>
<div class="t" style="left:38.00px;top:644.95px;font-size:13px;color:#fff;font-weight:bold;letter-spacing:-0.250px;">Communicate</div>
<svg style="left:14px;top:644.5px" width="15" height="13" viewBox="0 0 15 13"><rect x="0.3" y="3.7" width="6.6" height="4.2" fill="#fff"/><path d="M2.4 7.8 L6.6 7.8 L7 12.2 L3.4 12.2 Z" fill="#fff"/><path d="M6.9 4 L12.4 1.5 L12.4 10 L6.9 7.6 Z" fill="none" stroke="#fff" stroke-width="1.3" stroke-linejoin="round"/><rect x="12.4" y="5.3" width="1.8" height="1" fill="#fff"/></svg>
<svg style="left:175px;top:649.0px" width="6" height="9" viewBox="0 0 6 9"><path d="M5 1 L1.5 4.5 L5 8" fill="none" stroke="#fff" stroke-width="1.6"/></svg>
<div class="t" style="left:38.00px;top:687.95px;font-size:13px;color:#fff;font-weight:bold;letter-spacing:-0.371px;">Download Center</div>
<svg style="left:14px;top:687.5px" width="14" height="12" viewBox="0 0 14 12"><path d="M5.2 0 H8.4 V4.3 H11 L6.8 8.6 L2.6 4.3 H5.2 Z" fill="#fff"/><path d="M0 7.6 H3.7 L6.8 10.2 L9.9 7.6 H13.6 V12 H0 Z" fill="#fff"/><rect x="10" y="9.8" width="1" height="1" fill="#424242"/><rect x="11.6" y="9.8" width="1" height="1" fill="#424242"/></svg>
<svg style="left:175px;top:692.0px" width="6" height="9" viewBox="0 0 6 9"><path d="M5 1 L1.5 4.5 L5 8" fill="none" stroke="#fff" stroke-width="1.6"/></svg>
<div class="t" style="left:38.00px;top:730.95px;font-size:13px;color:#fff;font-weight:bold;letter-spacing:-0.386px;">Homework</div>
<svg style="left:14px;top:730.5px" width="14" height="13" viewBox="0 0 14 13"><path d="M3.3 1.4 H9.3 V2.6 H8.6 V5.2 L12.6 11.2 C13 12 12.6 12.4 11.8 12.4 H2 C1.2 12.4 0.8 12 1.2 11.2 L5 5.2 V2.6 H3.3 Z" fill="#fff"/><rect x="5.1" y="2.6" width="3.4" height="2.6" fill="#cfcfcf"/><path d="M6.9 5.6 L8.3 8 H5.5 Z" fill="#424242"/></svg>
<svg style="left:175px;top:735.0px" width="6" height="9" viewBox="0 0 6 9"><path d="M5 1 L1.5 4.5 L5 8" fill="none" stroke="#fff" stroke-width="1.6"/></svg>
<div class="t" style="left:38.00px;top:773.95px;font-size:13px;color:#fff;font-weight:bold;letter-spacing:-0.717px;">Library</div>
<svg style="left:14px;top:773.5px" width="14" height="13" viewBox="0 0 14 13"><path d="M2.5 0 H14 L11.5 10 H1 C0.3 10 0 11.3 1 11.3 H11.5 L14 2 V3 L12 12.5 H1 C-0.5 12.5 -0.5 9 1 9 Z" fill="#fff"/><rect x="4" y="2.5" width="7" height="0.9" fill="#424242"/><rect x="3.5" y="4.5" width="7" height="0.9" fill="#424242"/></svg>
<svg style="left:175px;top:778.0px" width="6" height="9" viewBox="0 0 6 9"><path d="M5 1 L1.5 4.5 L5 8" fill="none" stroke="#fff" stroke-width="1.6"/></svg>
</body></html>
